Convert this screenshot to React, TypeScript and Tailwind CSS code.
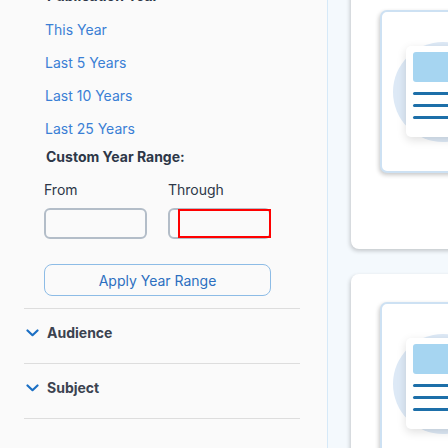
import React from "react";

function Chevron() {
  return (
    <svg width="13" height="8" viewBox="0 0 13 8" fill="none" className="shrink-0">
      <path d="M1.5 1.5 L6.5 6.2 L11.5 1.5" stroke="#1b6fc4" strokeWidth="2.2" strokeLinecap="round" strokeLinejoin="round" />
    </svg>
  );
}

function Illustration() {
  return (
    <div className="relative w-[220px] h-[163px] rounded-[7px] border-2 border-[#cde1f3] bg-white shadow-[-1px_2px_4px_rgba(0,0,0,0.22)] overflow-hidden">
      <div className="absolute left-[11px] top-[30px] w-[100px] h-[100px] rounded-full bg-[#dde9f6]" />
      <div className="absolute left-[24px] top-[34px] w-[120px] h-[91px] rounded-[5px] bg-white shadow-[0_3px_10px_rgba(0,0,0,0.13)]">
        <div className="ml-[7px] mt-[6px] w-[100px] h-[30px] rounded-[3px] bg-[#a6d5f1]" />
        <div className="ml-[7px] mt-[10px] w-[100px] h-[3px] rounded-full bg-[#1d6fa9]" />
        <div className="ml-[7px] mt-[9px] w-[100px] h-[3px] rounded-full bg-[#1d6fa9]" />
        <div className="ml-[7px] mt-[9px] w-[100px] h-[3px] rounded-full bg-[#1d6fa9]" />
      </div>
    </div>
  );
}

function Card({ top }: { top?: boolean }) {
  return (
    <div className={`w-[200px] shrink-0 rounded-[8px] bg-white shadow-[-1px_2px_4px_rgba(0,0,0,0.2)] pl-[29px] pt-[28px] ${top ? "h-[267px] -mt-[18px]" : "h-[260px] mt-[25px]"}`}>
      <Illustration />
    </div>
  );
}

export default function App() {
  const font = { fontFamily: "Inter, 'Noto Sans', sans-serif" };
  return (
    <div className="w-[448px] h-[448px] overflow-hidden flex" style={font}>
      <div className="w-[328px] shrink-0 h-full bg-[#fafafa] border-r border-[#d6e9f8] overflow-hidden">
        <div className="ml-[24px] w-[276px]">
          <div className="-mt-[21px] h-[34px] leading-[33px] pl-[23px] text-[14px] font-bold text-[#2d3748]">Publication Year</div>
          <div className="pl-[21px] text-[14px] text-[#3a7fd5]">
            <div className="h-[33px] leading-[33px]">This Year</div>
            <div className="h-[33px] leading-[33px]">Last 5 Years</div>
            <div className="h-[33px] leading-[33px]">Last 10 Years</div>
            <div className="h-[33px] leading-[33px]">Last 25 Years</div>
          </div>
          <div className="pl-[22px] h-[24px] leading-[24px] text-[14px] font-bold text-[#2d3748]">Custom Year Range:</div>
          <div className="pl-[20px] mt-[11px]">
            <div className="grid grid-cols-[103px_103px] gap-x-[21px] text-[14px] text-[#2d3748]">
              <div className="h-[20px] leading-[20px]">From</div>
              <div className="h-[20px] leading-[20px]">Through</div>
              <div className="mt-[8px] h-[31px] rounded-[6px] border-2 border-[#b3bdc8] bg-[#fafafa]" />
              <div className="relative mt-[8px] h-[31px] rounded-[6px] border-2 border-[#b3bdc8] bg-[#fafafa]">
                <div className="absolute left-[8px] -top-[1px] -right-[2px] -bottom-[1px] border-2 border-[#ff0000]" />
              </div>
            </div>
            <div className="mt-[25px] w-[227px] h-[32px] rounded-[8px] border-[1.5px] border-[#8dbce6] flex items-center justify-center text-[14px] text-[#2c6fc0]">
              Apply Year Range
            </div>
          </div>
          <div className="mt-[12px] h-px bg-[#dddddd]" />
          <div className="h-[54px] pt-[14px] flex items-start gap-[8px] pl-[2px]">
            <div className="h-[20px] flex items-center"><Chevron /></div>
            <div className="h-[20px] leading-[20px] text-[14px] font-bold text-[#3b4350]">Audience</div>
          </div>
          <div className="h-px bg-[#dddddd]" />
          <div className="h-[54px] pt-[14px] flex items-start gap-[8px] pl-[2px]">
            <div className="h-[20px] flex items-center"><Chevron /></div>
            <div className="h-[20px] leading-[20px] text-[14px] font-bold text-[#3b4350]">Subject</div>
          </div>
          <div className="h-px bg-[#dddddd]" />
        </div>
      </div>
      <div className="flex-1 h-full bg-[#f4f9fd] pl-[23px] overflow-hidden">
        <Card top />
        <Card />
      </div>
    </div>
  );
}
